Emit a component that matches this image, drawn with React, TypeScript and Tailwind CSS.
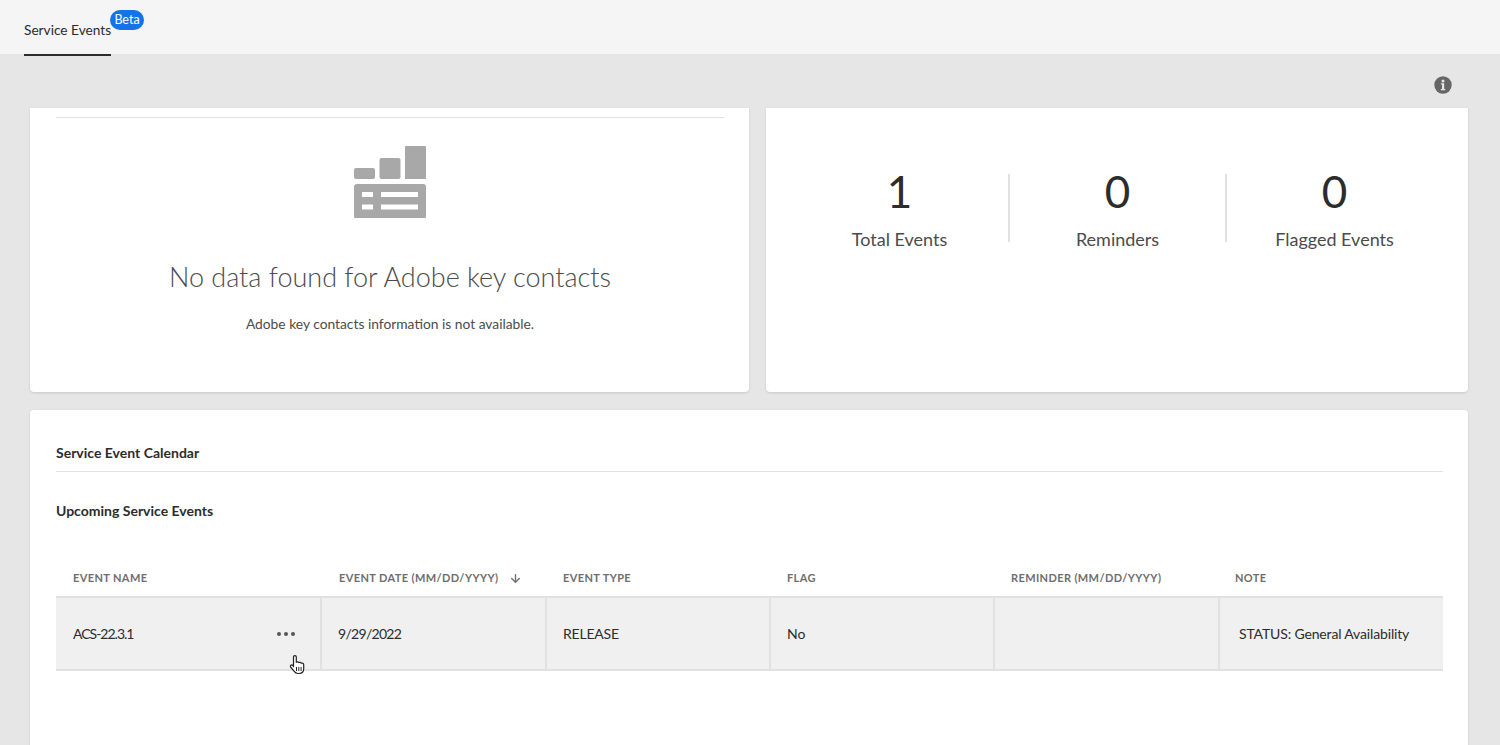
import { ArrowDown } from 'lucide-react';

const stats = [
  { value: '1', label: 'Total Events' },
  { value: '0', label: 'Reminders' },
  { value: '0', label: 'Flagged Events' },
];

const columns = [
  { label: 'EVENT NAME', width: 'w-[266px]' },
  { label: 'EVENT DATE (MM/DD/YYYY)', width: 'w-[224px]', sorted: true },
  { label: 'EVENT TYPE', width: 'w-[224px]' },
  { label: 'FLAG', width: 'w-[224px]' },
  { label: 'REMINDER (MM/DD/YYYY)', width: 'w-[224px]' },
  { label: 'NOTE', width: 'flex-1' },
];

const font = { fontFamily: 'Lato, "Noto Sans", sans-serif' };

function EmptyIcon() {
  return (
    <svg width="72" height="72" viewBox="0 0 72 72" fill="#a8a8a8">
      <rect x="0" y="22" width="21" height="11" rx="2" />
      <rect x="25.500" y="12" width="21" height="21" rx="2" />
      <path d="M51 1a1 1 0 0 1 1-1h19a1 1 0 0 1 1 1v32H51z" />
      <path
        fillRule="evenodd"
        d="M3 38h66a3 3 0 0 1 3 3v29a3 3 0 0 1-3 3H3a3 3 0 0 1-3-3V41a3 3 0 0 1 3-3zm5 8v5h11v-5zm19 0v5h37v-5zM8 58.500v5h11v-5zm19 0v5h37v-5z"
      />
    </svg>
  );
}

function InfoIcon() {
  return (
    <svg width="18" height="18" viewBox="0 0 18 18">
      <circle cx="9" cy="9" r="8.7" fill="#666" />
      <circle cx="9" cy="4.900" r="1.500" fill="#e6e6e6" />
      <path d="M6.900 7.300h3.300v5.600h1.100v1.300H6.800v-1.300h1.200V8.600H6.900z" fill="#e6e6e6" />
    </svg>
  );
}

function HandCursor() {
  return (
    <svg width="18" height="21" viewBox="0 0 18 21" className="absolute left-[232px] top-[56px]">
      <path
        d="M5.500 12.500V3a1.400 1.400 0 0 1 2.800 0v5.200c.9-.7 2.200-.5 2.600.4.900-.5 2-.3 2.400.6 1-.4 2.400.2 2.400 1.600v4c0 2.600-1.700 4.700-4.600 4.700H10c-1.900 0-3-.9-4-2.300L2.600 13c-.9-1.300.9-2.900 2.100-1.500z"
        fill="#fff"
        stroke="#222"
        strokeWidth="1.200"
        strokeLinejoin="round"
      />
      <path d="M8.500 13v4M10.800 13v4M13.100 13v4" stroke="#222" strokeWidth="1" />
    </svg>
  );
}

export default function App() {
  return (
    <div className="h-[745px] overflow-hidden bg-[#e6e6e6] text-[#2c2c2c]" style={font}>
      {/* Tabs */}
      <div className="h-[54px] bg-[#f5f5f5] pl-6">
        <div className="relative inline-block h-[56px] border-b-2 border-[#2c2c2c] pt-[21px] text-[13.7px] leading-[18px]">
          Service Events
          <span className="absolute left-[86px] top-[10px] flex h-5 w-[34px] items-center justify-center rounded-full bg-[#1473e6] text-[12.5px] text-white">
            Beta
          </span>
        </div>
      </div>

      <div className="flex h-[54px] items-start justify-end pr-[48px] pt-[22px]">
        <InfoIcon />
      </div>

      <div className="pl-[30px] pr-8">
        <div className="flex gap-[17px]">
          {/* Key contacts */}
          <div className="h-[284px] w-[719px] rounded-b bg-white pl-[26px] pr-[25px] pt-[9px] shadow-sm">
            <div className="h-px bg-[#e1e1e1]" />
            <div className="flex flex-col items-center pt-[28px]">
              <EmptyIcon />
              <h2 className="mt-[42px] text-[27px] font-light leading-[34px] text-[#4b4b4b]">
                No data found for Adobe key contacts
              </h2>
              <p className="mt-[20px] text-[13.8px] leading-5 text-[#4b4b4b]">
                Adobe key contacts information is not available.
              </p>
            </div>
          </div>

          {/* Totals */}
          <div className="flex h-[284px] flex-1 justify-center rounded-b bg-white pr-px pt-[66px] shadow-sm">
            {stats.map((stat, i) => (
              <div
                key={stat.label}
                className={
                  i === 0
                    ? 'flex h-[68px] w-[217px] flex-col items-center'
                    : 'flex h-[68px] w-[217px] flex-col items-center border-l-2 border-[#e1e1e1]'
                }
              >
                <p className="-mt-[11px] h-[56px] text-[44px] leading-[56px]">{stat.value}</p>
                <p className="mt-[8px] text-lg leading-6 text-[#4b4b4b]">{stat.label}</p>
              </div>
            ))}
          </div>
        </div>

        {/* Calendar */}
        <div className="mt-[18px] h-[400px] rounded bg-white pl-[26px] pr-[25px] pt-[34px] shadow-sm">
          <h3 className="border-b border-[#e1e1e1] pb-[9px] text-sm font-bold leading-[18px]">Service Event Calendar</h3>
          <h3 className="mt-[30px] text-sm font-bold leading-[18px]">Upcoming Service Events</h3>

          <div className="mt-[40px] flex h-[38px] items-center border-b-2 border-[#e1e1e1]">
            {columns.map((col) => (
              <div
                key={col.label}
                className={`${col.width} flex items-center gap-[11px] pl-[17px] text-[11px] font-bold tracking-[0.035em] text-[#6e6e6e]`}
              >
                {col.label}
                {col.sorted && <ArrowDown size={13} strokeWidth={2.5} />}
              </div>
            ))}
          </div>

          <div className="relative flex h-[73px] items-stretch border-b-2 border-[#e1e1e1] bg-[#f0f0f0] text-sm">
            <div className="flex w-[266px] items-center justify-between border-r-2 border-[#e1e1e1] pl-[17px] pr-[25px] tracking-[-1px]">
              ACS-22.3.1
              <span className="flex gap-[3px]">
                <i className="size-[4px] rounded-full bg-[#555]" />
                <i className="size-[4px] rounded-full bg-[#555]" />
                <i className="size-[4px] rounded-full bg-[#555]" />
              </span>
            </div>
            <div className="flex w-[225px] items-center border-r-2 border-[#e1e1e1] pl-[16px] tracking-[-0.7px]">9/29/2022</div>
            <div className="flex w-[224px] items-center border-r-2 border-[#e1e1e1] pl-[16px] tracking-[-0.2px]">RELEASE</div>
            <div className="flex w-[224px] items-center border-r-2 border-[#e1e1e1] pl-[16px]">No</div>
            <div className="flex w-[225px] items-center border-r-2 border-[#e1e1e1]" />
            <div className="flex flex-1 items-center pl-[19px] tracking-[-0.15px]">STATUS: General Availability</div>
            <HandCursor />
          </div>
        </div>
      </div>
    </div>
  );
}
